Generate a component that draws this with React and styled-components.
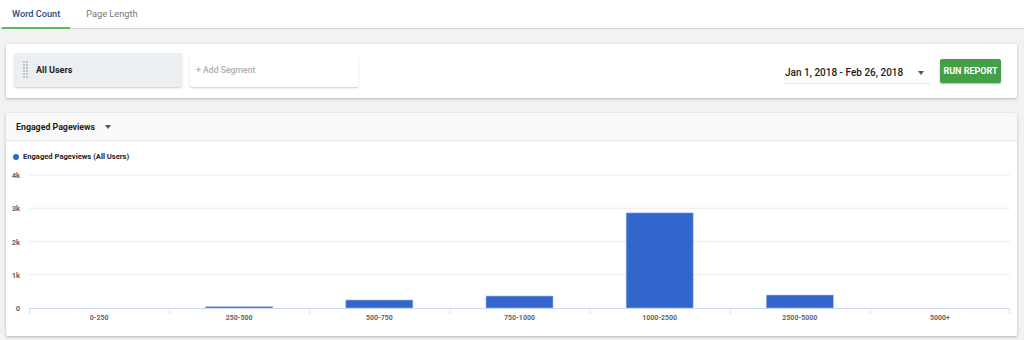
import React from 'react';
import styled, { createGlobalStyle } from 'styled-components';

const GlobalStyle = createGlobalStyle`
    html, body {
        margin: 0;
        padding: 0;
        background: #f2f2f2;
        font-family: Roboto, "Liberation Sans", Arial, sans-serif;
    }
`;

const Page = styled.div`
    width: 1024px;
    height: 340px;
    overflow: hidden;
    background: #f2f2f2;
`;

const TabBar = styled.div`
    display: flex;
    height: 28px;
    padding-left: 2px;
    background: #fff;
    border-bottom: 1px solid #d6d6d6;
`;

const Tab = styled.div`
    display: flex;
    align-items: center;
    padding: 0 10px;
    margin-right: 6px;
    white-space: nowrap;
    font-size: 9.2px;
    font-weight: ${({active}) => active ? 500 : 400};
    color: ${({active}) => active ? '#2b4a78' : '#777'};
    border-bottom: 2px solid ${({active}) => active ? '#5cb85c' : 'transparent'};
    margin-bottom: -1px;
`;

const Content = styled.div`
    padding: 15px 7px 0 6px;
    display: flex;
    flex-direction: column;
    gap: 15px;
`;

const Card = styled.div`
    background: #fff;
    box-shadow: 0 1px 3px rgba(0, 0, 0, .25);
    border-radius: 2px;
`;

const SegmentCard = styled(Card)`
    height: 54px;
    box-sizing: border-box;
    padding: 9px 16px 0 8px;
    display: flex;
    align-items: flex-start;
`;

const Chip = styled.div`
    width: 168px;
    height: 34px;
    box-sizing: border-box;
    display: flex;
    align-items: center;
    gap: 8px;
    padding-left: ${({filled}) => filled ? '9px' : '6px'};
    margin-right: 8px;
    white-space: nowrap;
    background: ${({filled}) => filled ? '#eceff2' : '#fff'};
    box-shadow: 0 1px 2px rgba(0, 0, 0, .2);
    border-radius: 2px;
    font-size: ${({filled}) => filled ? '9px' : '8.7px'};
    font-weight: ${({filled}) => filled ? 700 : 500};
    color: ${({filled}) => filled ? '#222' : '#b0b0b0'};
`;

const Handle = styled.div`
    width: 5px;
    height: 18px;
    background-image: radial-gradient(circle at 1px 1px, #c2c2c2 0.7px, transparent 1px);
    background-size: 3px 3px;
`;

const Spacer = styled.div`
    flex: 1;
`;

const DatePicker = styled.div`
    margin-top: 9px;
    width: 147px;
    height: 22px;
    box-sizing: border-box;
    display: flex;
    align-items: center;
    justify-content: space-between;
    padding: 0 6px 0 2px;
    white-space: nowrap;
    border-bottom: 1px solid #e6e6e6;
    font-size: 10px;
    font-weight: 500;
    color: #222;
`;

const Caret = styled.span`
    width: 0;
    height: 0;
    border-left: 3.5px solid transparent;
    border-right: 3.5px solid transparent;
    border-top: 4px solid #555;
`;

const RunButton = styled.button`
    margin: 6px 0 0 10px;
    width: 61px;
    height: 24px;
    padding: 0;
    border: none;
    border-radius: 2px;
    background: #43a047;
    color: #fff;
    font-family: Roboto, "Liberation Sans", Arial, sans-serif;
    font-size: 9px;
    font-weight: 700;
    white-space: nowrap;
    box-shadow: 0 1px 2px rgba(0, 0, 0, .3);
`;

const ChartCard = styled(Card)`
    height: 223px;
    overflow: hidden;
`;

const ChartHeader = styled.div`
    height: 27px;
    display: flex;
    align-items: center;
    gap: 10px;
    padding-left: 10px;
    background: #fafafa;
    border-bottom: 1px solid #e3e3e3;
    font-size: 8.8px;
    font-weight: 700;
    color: #222;
`;

const Legend = styled.div`
    display: flex;
    align-items: center;
    gap: 4px;
    padding: 9px 0 0 7px;
    height: 13px;
    font-size: 7.6px;
    font-weight: 700;
    color: #222;
`;

const Dot = styled.span`
    width: 6px;
    height: 6px;
    border-radius: 50%;
    background: #3366cc;
`;

const categories = [
    { label: '0-250', value: 0 },
    { label: '250-500', value: 40 },
    { label: '500-750', value: 240 },
    { label: '750-1000', value: 360 },
    { label: '1000-2500', value: 2860 },
    { label: '2500-5000', value: 390 },
    { label: '5000+', value: 0 },
];

const X0 = 23;
const X1 = 1004;
const Y0 = 145;
const PER_K = 33.25;

const Chart = () => {
    const step = (X1 - X0) / categories.length;
    return (
        <svg width="1011" height="173" style={{ display: 'block' }}>
            {[4, 3, 2, 1].map(k => (
                <line key={k} x1={X0} x2={X1} y1={Y0 - k * PER_K} y2={Y0 - k * PER_K}
                      stroke="#ebebeb" strokeWidth="1"/>
            ))}
            {[0, 1, 2, 3, 4].map(k => (
                <text key={k} x="14" y={Y0 - k * PER_K + 3} textAnchor="end"
                      fontSize="7.5" fontWeight="700" fill="#666"
                      fontFamily="Roboto, Arial, sans-serif">
                    {k === 0 ? '0' : `${k}k`}
                </text>
            ))}
            {categories.map((c, i) => {
                const cx = X0 + step * (i + 0.5);
                const h = c.value / 1000 * PER_K;
                return (
                    <g key={c.label}>
                        {h > 0 && (
                            <rect x={cx - 33.5} y={Y0 - h} width="67" height={h}
                                  fill="#3366cc" stroke="#9bb8ee" strokeWidth="0.6"/>
                        )}
                        <text x={cx} y="157" textAnchor="middle" fontSize="7"
                              fontWeight="700" fill="#666"
                              fontFamily="Roboto, Arial, sans-serif">
                            {c.label}
                        </text>
                    </g>
                );
            })}
            <line x1={X0} x2={X1} y1={Y0 + 0.5} y2={Y0 + 0.5} stroke="#cdd6f2" strokeWidth="1"/>
            {categories.map((c, i) => (
                <line key={i} x1={X0 + step * i + 0.5} x2={X0 + step * i + 0.5}
                      y1={Y0} y2={Y0 + 6} stroke="#d8def2" strokeWidth="1"/>
            ))}
            <line x1={X1 - 0.5} x2={X1 - 0.5} y1={Y0} y2={Y0 + 6} stroke="#d8def2" strokeWidth="1"/>
        </svg>
    );
};

const App = () => (
    <Page>
        <GlobalStyle/>
        <TabBar>
            <Tab active>Word Count</Tab>
            <Tab>Page Length</Tab>
        </TabBar>
        <Content>
            <SegmentCard>
                <Chip filled>
                    <Handle/>
                    All Users
                </Chip>
                <Chip>+ Add Segment</Chip>
                <Spacer/>
                <DatePicker>
                    <span>Jan 1, 2018 - Feb 26, 2018</span>
                    <Caret/>
                </DatePicker>
                <RunButton>RUN REPORT</RunButton>
            </SegmentCard>
            <ChartCard>
                <ChartHeader>
                    Engaged Pageviews
                    <Caret/>
                </ChartHeader>
                <Legend>
                    <Dot/>
                    Engaged Pageviews (All Users)
                </Legend>
                <Chart/>
            </ChartCard>
        </Content>
    </Page>
);

export default App;
